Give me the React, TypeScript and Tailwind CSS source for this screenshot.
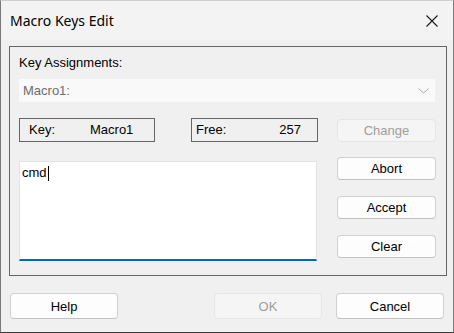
import React from 'react';

const font = { fontFamily: '"Liberation Sans", Arial, sans-serif' };

function Button({ label, disabled, className = '' }: { label: string; disabled?: boolean; className?: string }) {
  return (
    <button
      disabled={disabled}
      className={`flex items-center justify-center rounded-[4px] border text-[13px] leading-none ${
        disabled
          ? 'bg-[#f5f5f5] border-[#e6e6e6] text-[#9d9d9d]'
          : 'bg-[#fdfdfd] border-[#d0d0d0] border-b-[#c2c2c2] text-black'
      } ${className}`}
    >
      {label}
    </button>
  );
}

export default function App() {
  return (
    <div
      className="w-[454px] h-[333px] bg-[#f0f0f0] border-x border-b border-t border-x-[#7a7a7a] border-b-[#3a3a3a] border-t-[#cfcfcf] flex flex-col"
      style={font}
    >
      {/* Title bar */}
      <div className="h-[39px] bg-[#f3f3f3] flex items-center justify-between pl-[9px] pr-[15px]">
        <span className="text-[14px] text-black" style={{ fontFamily: '"Noto Sans", "Open Sans", sans-serif' }}>
          Macro Keys Edit
        </span>
        <svg width="12" height="12" viewBox="0 0 12 12" className="mt-[1px]">
          <path d="M0.5 0.5L11.5 11.5M11.5 0.5L0.5 11.5" stroke="#1a1a1a" strokeWidth="1.1" />
        </svg>
      </div>

      {/* Group box */}
      <div className="mt-[6px] ml-[8px] w-[438px] h-[230px] border border-[#666666] pl-[9px] pt-[8px] flex flex-col">
        <div className="text-[13px] leading-[16px] text-black">Key Assignments:</div>

        {/* Disabled combo */}
        <div className="mt-[8px] w-[416px] h-[23px] bg-[#f9f9f9] flex items-center justify-between pl-[4px] pr-[6px]">
          <span className="text-[13px] text-[#6d6d6d]">Macro1:</span>
          <svg width="11" height="6" viewBox="0 0 11 6">
            <path d="M0.5 0.5L5.5 5L10.5 0.5" fill="none" stroke="#a8a8a8" strokeWidth="1" />
          </svg>
        </div>

        {/* Key / Free / Change row */}
        <div className="mt-[16px] flex items-start">
          <div className="w-[136px] h-[24px] border border-[#666666] flex items-center pl-[9px] text-[13px] text-black">
            <span className="w-[61px]">Key:</span>
            <span>Macro1</span>
          </div>
          <div className="ml-[36px] w-[127px] h-[24px] border border-[#666666] flex items-center justify-between pl-[4px] pr-[16px] text-[13px] text-black">
            <span>Free:</span>
            <span>257</span>
          </div>
          <Button label="Change" disabled className="ml-[19px] mt-[1px] w-[99px] h-[23px]" />
        </div>

        {/* Edit area + side buttons */}
        <div className="mt-[15px] flex items-start">
          <div className="mt-[4px] w-[298px] h-[100px] bg-white border border-[#e3e3e3] border-b-2 border-b-[#0067c0] pl-[2px] pt-[3px]">
            <div className="flex items-center text-[13px] leading-[16px] text-black">
              <span>cmd</span>
              <span className="w-[1px] h-[15px] bg-black ml-[1px]" />
            </div>
          </div>
          <div className="ml-[20px] flex flex-col gap-[16px]">
            <Button label="Abort" className="w-[99px] h-[23px]" />
            <Button label="Accept" className="w-[99px] h-[23px]" />
            <Button label="Clear" className="w-[99px] h-[23px]" />
          </div>
        </div>
      </div>

      {/* Bottom buttons */}
      <div className="mt-[17px] ml-[9px] flex items-start">
        <Button label="Help" className="w-[108px] h-[26px]" />
        <Button label="OK" disabled className="ml-[96px] w-[108px] h-[26px]" />
        <Button label="Cancel" className="ml-[14px] w-[108px] h-[26px]" />
      </div>
    </div>
  );
}
